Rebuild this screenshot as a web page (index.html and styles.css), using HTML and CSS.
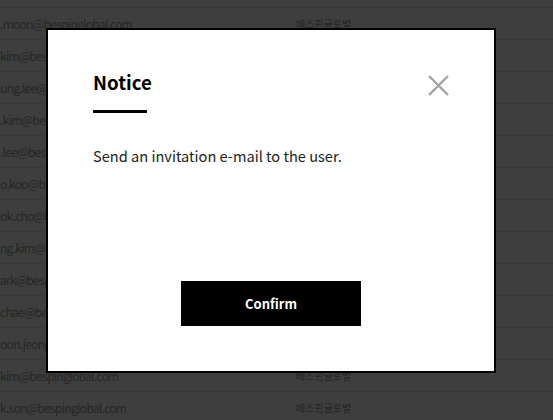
FILE: index.html
```html
<!DOCTYPE html>
<html lang="en">
<head>
<meta charset="utf-8">
<title>Notice</title>
<link rel="stylesheet" href="styles.css">
</head>
<body>
<div class="list">
  <div class="row"><span class="email">.moon@bespinglobal.com</span><span class="company">베스핀글로벌</span></div>
  <div class="row"><span class="email">kim@bespinglobal.com</span><span class="company">베스핀글로벌</span></div>
  <div class="row"><span class="email">ung.lee@bespinglobal.com</span><span class="company">베스핀글로벌</span></div>
  <div class="row"><span class="email">.kim@bespinglobal.com</span><span class="company">베스핀글로벌</span></div>
  <div class="row"><span class="email">.lee@bespinglobal.com</span><span class="company">베스핀글로벌</span></div>
  <div class="row"><span class="email">o.koo@bespinglobal.com</span><span class="company">베스핀글로벌</span></div>
  <div class="row"><span class="email">ok.cho@bespinglobal.com</span><span class="company">베스핀글로벌</span></div>
  <div class="row"><span class="email">ng.kim@bespinglobal.com</span><span class="company">베스핀글로벌</span></div>
  <div class="row"><span class="email">ark@bespinglobal.com</span><span class="company">베스핀글로벌</span></div>
  <div class="row"><span class="email">chae@bespinglobal.com</span><span class="company">베스핀글로벌</span></div>
  <div class="row"><span class="email">oon.jeong@bespinglobal.com</span><span class="company">베스핀글로벌</span></div>
  <div class="row"><span class="email">kim@bespinglobal.com</span><span class="company">베스핀글로벌</span></div>
  <div class="row"><span class="email">k.son@bespinglobal.com</span><span class="company">베스핀글로벌</span></div>
</div>
<div class="overlay"></div>
<div class="modal" role="dialog">
  <div class="modal-head">
    <div class="title-wrap">
      <h2 class="title">Notice</h2>
      <div class="title-bar"></div>
    </div>
    <button class="close" aria-label="Close">
      <svg width="21" height="21" viewBox="0 0 21 21"><path d="M1 1 L20 20 M20 1 L1 20" stroke="#a2a2a2" stroke-width="2.4" fill="none"/></svg>
    </button>
  </div>
  <p class="message">Send an invitation e-mail to the user.</p>
  <div class="actions">
    <button class="confirm">Confirm</button>
  </div>
</div>
</body>
</html>
```
FILE: styles.css
```css
html, body {
  margin: 0;
  padding: 0;
  height: 100%;
  overflow: hidden;
  background: #fff;
  font-family: "Noto Sans CJK KR", "Noto Sans", sans-serif;
}
.list {
  padding-top: 7px;
}
.row {
  display: flex;
  align-items: center;
  height: 31px;
  border-top: 1px solid #e6e6e6;
  font-size: 12px;
  letter-spacing: -0.7px;
  color: #9a9a9a;
}
.email {
  width: 296px;
  white-space: nowrap;
  overflow: hidden;
}
.company {
  font-size: 10px;
  letter-spacing: 0;
}
.overlay {
  position: fixed;
  inset: 0;
  background: rgba(0, 0, 0, 0.755);
}
.modal {
  position: fixed;
  left: 46px;
  top: 28px;
  width: 450px;
  height: 345px;
  background: #fff;
  border: 2px solid #000;
  padding: 39px 45px 45px;
  box-sizing: border-box;
  display: flex;
  flex-direction: column;
}
.modal-head {
  display: flex;
  justify-content: space-between;
  align-items: flex-start;
}
.title {
  margin: 0;
  font-size: 18.7px;
  line-height: 25px;
  font-weight: 700;
  color: #000;
}
.title-bar {
  margin-top: 16px;
  width: 54px;
  height: 3px;
  background: #000;
}
.close {
  margin-top: 6px;
  padding: 0;
  border: 0;
  background: none;
  width: 21px;
  height: 21px;
  display: block;
}
.close svg {
  display: block;
}
.message {
  margin: 32px 0 0;
  font-size: 14.6px;
  line-height: 22px;
  color: #222;
}
.actions {
  margin-top: auto;
  display: flex;
  justify-content: center;
}
.confirm {
  width: 180px;
  height: 45px;
  border: 0;
  background: #000;
  color: #fff;
  font-family: "Noto Sans CJK KR", "Noto Sans", sans-serif;
  font-size: 13px;
  font-weight: 700;
}
```
